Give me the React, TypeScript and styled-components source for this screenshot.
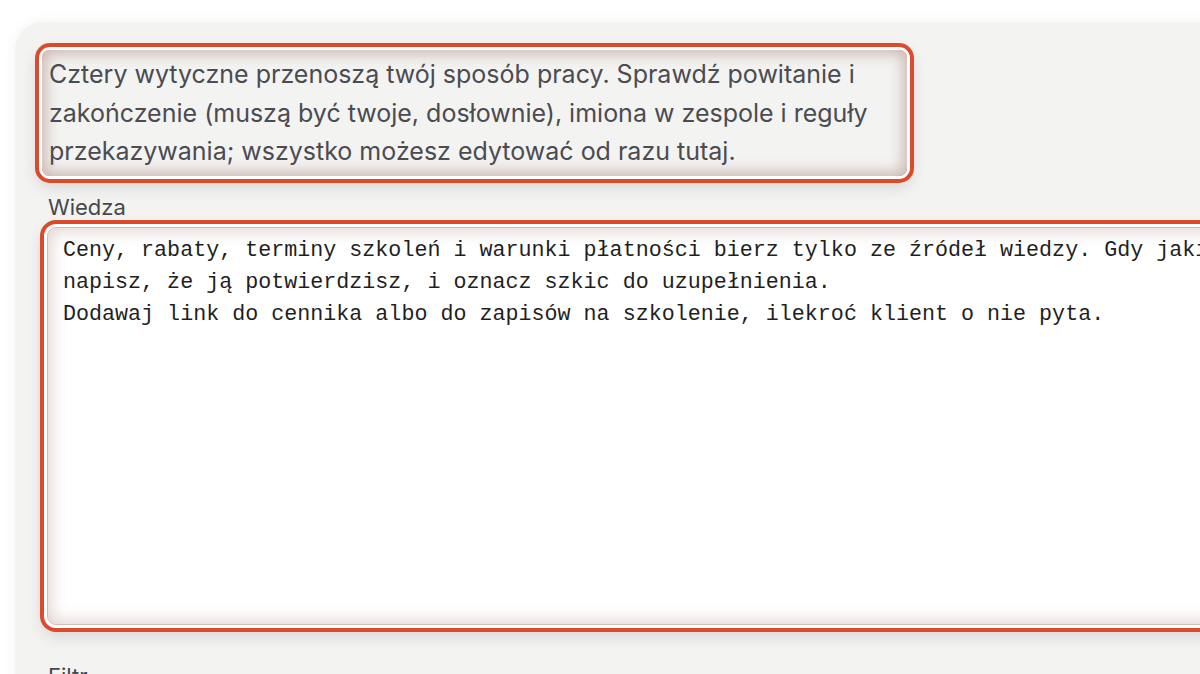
import styled, { createGlobalStyle } from "styled-components";

const GlobalStyle = createGlobalStyle`
  html, body {
    margin: 0;
    padding: 0;
    background: #ffffff;
    overflow: hidden;
  }
  body {
    font-family: Inter, "Noto Sans", sans-serif;
  }
`;

const instructions =
  "Cztery wytyczne przenoszą twój sposób pracy. Sprawdź powitanie i zakończenie (muszą być twoje, dosłownie), imiona w zespole i reguły przekazywania; wszystko możesz edytować od razu tutaj.";

const knowledge = [
  "Ceny, rabaty, terminy szkoleń i warunki płatności bierz tylko ze źródeł wiedzy. Gdy jakiejś informacji brakuje,",
  "napisz, że ją potwierdzisz, i oznacz szkic do uzupełnienia.",
  "Dodawaj link do cennika albo do zapisów na szkolenie, ilekroć klient o nie pyta.",
].join("\n");

const App = () => (
  <>
    <GlobalStyle />
    <Page>
      <Card>
        <Intro>{instructions}</Intro>
        <Section>
          <Label htmlFor="wiedza">Wiedza</Label>
          <Editor id="wiedza" defaultValue={knowledge} spellCheck={false} wrap="off" />
        </Section>
        <Section>
          <Label htmlFor="filtr">Filtr</Label>
        </Section>
      </Card>
    </Page>
  </>
);

export default App;

const highlight = `
  0 0 0 3px #ffffff,
  0 0 0 7px #dc4a2c,
  0 6px 16px 4px rgba(60, 40, 30, 0.16)
`;

const Page = styled.div`
  width: 1200px;
  height: 674px;
  padding: 22px 0 0 15px;
  box-sizing: border-box;
  overflow: hidden;
`;

const Card = styled.div`
  width: 1400px;
  min-height: 760px;
  background: #f3f3f1;
  border-radius: 28px;
  box-shadow: 0 0 14px rgba(0, 0, 0, 0.05);
  padding: 28px 0 0 33px;
  box-sizing: border-box;
  display: flex;
  flex-direction: column;
`;

const Intro = styled.p`
  margin: 0 0 0 -6px;
  width: 865px;
  box-sizing: border-box;
  padding: 5px 7px;
  font-size: 25px;
  line-height: 38.5px;
  color: #4b4b52;
  border-radius: 8px;
  box-shadow: inset 0 0 14px 4px rgba(120, 60, 50, 0.32), ${highlight};
`;

const Section = styled.div`
  display: flex;
  flex-direction: column;
  gap: 7px;
  margin-top: 18px;

  & + & {
    margin-top: 38px;
  }
`;

const Label = styled.label`
  font-size: 22px;
  line-height: 26px;
  font-weight: 400;
  color: #48484d;
`;

const Editor = styled.textarea`
  width: 1300px;
  height: 398px;
  box-sizing: border-box;
  resize: none;
  margin: 0 0 0 -1px;
  padding: 7px 15px;
  border: 1px solid #d2bdb8;
  border-radius: 9px;
  background: #ffffff;
  font-family: "Liberation Mono", "DejaVu Sans Mono", monospace;
  font-size: 21.7px;
  line-height: 32px;
  color: #1f1f1f;
  white-space: pre;
  overflow: hidden;
  outline: none;
  box-shadow: inset 0 0 16px 3px rgba(120, 60, 50, 0.22), ${highlight};
`;
